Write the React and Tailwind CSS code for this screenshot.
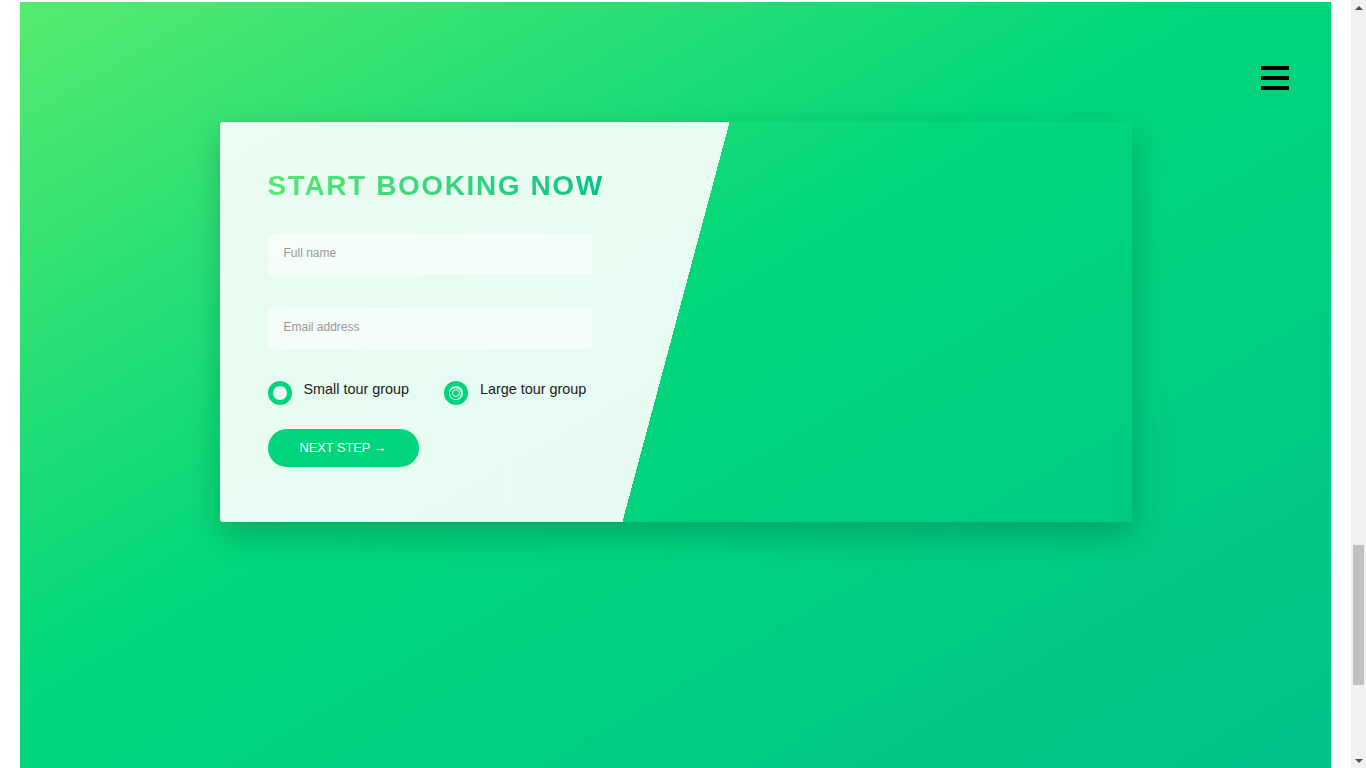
import React from 'react';

const RadioOption = ({ label, checked }) => {
  return (
    <label className="flex w-[49%] cursor-pointer items-start">
      <span className="mt-[2px] flex h-6 w-6 shrink-0 items-center justify-center rounded-full border-[5px] border-[#00d47c]">
        {checked && (
          <span className="flex h-[11px] w-[11px] items-center justify-center rounded-full bg-[#00d47c]">
            <span className="h-[8px] w-[8px] rounded-full border-[1.5px] border-white/90" />
          </span>
        )}
      </span>
      <span className="ml-3 text-[14.4px] leading-[20px] text-[#1a1a1a]">{label}</span>
    </label>
  );
};

const Scrollbar = () => {
  return (
    <div className="flex w-[15px] shrink-0 flex-col bg-[#f1f1f1]">
      <div className="flex h-[15px] items-center justify-center">
        <svg width="8" height="4" viewBox="0 0 8 4">
          <path d="M0 4 L4 0 L8 4 Z" fill="#505050" />
        </svg>
      </div>
      <div className="flex-1 px-[2px] pt-[530px]">
        <div className="h-[140px] bg-[#c1c1c1]" />
      </div>
      <div className="flex h-[15px] items-center justify-center">
        <svg width="8" height="4" viewBox="0 0 8 4">
          <path d="M0 0 L8 0 L4 4 Z" fill="#505050" />
        </svg>
      </div>
    </div>
  );
};

const App = () => {
  return (
    <div className="flex h-screen overflow-hidden bg-white font-['Liberation_Sans',Arial,sans-serif]">
      <main className="flex-1 px-[20px] pt-[2px]">
        {/* Booking section */}
        <section className="relative h-[766px] bg-[linear-gradient(to_right_bottom,#55ea6f_0%,#00d67a_45%,#00c38a_100%)] pt-[120px]">
          {/* Nav toggle */}
          <button className="absolute right-[42px] top-[64px] flex flex-col gap-[6px]">
            <span className="block h-[4px] w-[28px] bg-black" />
            <span className="block h-[4px] w-[28px] bg-black" />
            <span className="block h-[4px] w-[28px] bg-black" />
          </button>

          <div className="mx-auto h-[400px] w-[912px] rounded-[3px] bg-[linear-gradient(105deg,rgba(255,255,255,0.9)_0%,rgba(255,255,255,0.9)_50%,transparent_50%)] shadow-[0_12px_32px_rgba(0,0,0,0.2)]">
            <form className="w-1/2 p-12">
              <h2 className="inline-block bg-linear-to-r from-[#55e96f] to-[#00c389] bg-clip-text text-[28px] font-bold uppercase leading-[32px] tracking-[1.6px] text-transparent">
                Start booking now
              </h2>

              <div className="mt-8">
                <input
                  type="text"
                  placeholder="Full name"
                  className="block h-[41px] w-[90%] rounded-[2px] border-b-[3px] border-transparent bg-white/50 px-4 text-[12px] text-[#555] outline-none placeholder:text-[#999]"
                />
              </div>

              <div className="mt-[33px]">
                <input
                  type="email"
                  placeholder="Email address"
                  className="block h-[41px] w-[90%] rounded-[2px] border-b-[3px] border-transparent bg-white/50 px-4 text-[12px] text-[#555] outline-none placeholder:text-[#999]"
                />
              </div>

              <div className="mt-[30px] flex">
                <RadioOption label="Small tour group" />
                <RadioOption label="Large tour group" checked />
              </div>

              <button
                type="button"
                className="mt-[24px] h-[38px] rounded-full bg-[#00d47c] px-8 text-[12.8px] uppercase text-white"
              >
                Next step &rarr;
              </button>
            </form>
          </div>
        </section>
      </main>
      <Scrollbar />
    </div>
  );
};

export default App;
